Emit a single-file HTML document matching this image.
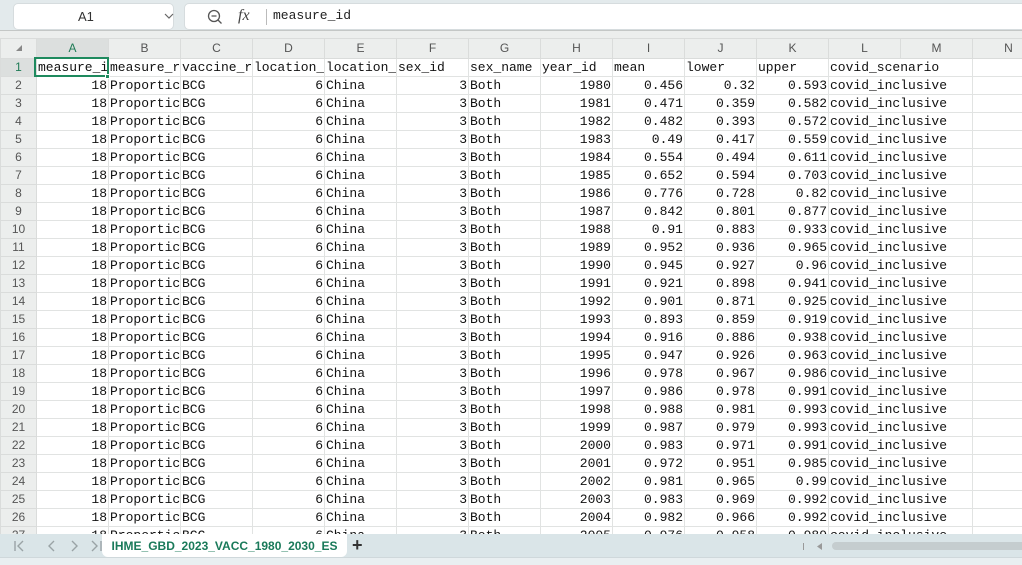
<!DOCTYPE html>
<html><head><meta charset="utf-8"><style>
*{margin:0;padding:0;box-sizing:border-box}
body{width:1022px;height:565px;overflow:hidden;background:#fff;position:relative;font-family:"Liberation Sans",sans-serif}
#top{position:absolute;left:0;top:0;width:1022px;height:30px;background:#e3eaec}
#nb{position:absolute;left:13px;top:3px;width:161px;height:27px;background:#fff;border:1px solid #d6dcde;border-radius:5px;font-size:13px;color:#333}
#fb{position:absolute;left:184px;top:3px;width:850px;height:27px;background:#fff;border:1px solid #d6dcde;border-radius:5px}
#hdrbg{position:absolute;left:0;top:30px;width:1022px;height:28px;background:#eceeed;border-top:1px solid #c4c7c6}
table{position:absolute;left:0;top:38px;width:1044px;border-collapse:collapse;table-layout:fixed;font-family:"Liberation Mono",monospace;font-size:13px;color:#111}
td{height:18px;border:1px solid #e1e3e2;white-space:nowrap;overflow:hidden;padding:0 1px;line-height:17px}
tr.ch td{height:20px;background:#eceeed;text-align:center;font-family:"Liberation Sans",sans-serif;color:#555;font-size:12px;border-color:#dadcdb}
td.rh{background:#eceeed;text-align:center;font-family:"Liberation Sans",sans-serif;color:#555;font-size:12px;border-color:#dadcdb}
td.n{text-align:right}
#tabs{position:absolute;left:0;top:534px;width:1022px;height:23px;background:#dae5e8}
#bot{position:absolute;left:0;top:557px;width:1022px;height:8px;background:#e9eff1;border-top:1px solid #cfd8db}
</style></head><body>
<div id="top"></div>
<div id="nb"><span style="position:absolute;left:64px;top:5px">A1</span><svg style="position:absolute;left:150px;top:9px" width="10" height="7"><path d="M1 1l4 4 4-4" fill="none" stroke="#666" stroke-width="1.2"/></svg></div>
<div id="fb"><svg style="position:absolute;left:22px;top:5px" width="16" height="16"><circle cx="7" cy="7" r="5.5" fill="none" stroke="#555" stroke-width="1.3"/><path d="M11 11l3.5 3.5M4.5 7h5" stroke="#555" stroke-width="1.3"/></svg><span style="position:absolute;left:53px;top:3px;font-family:'Liberation Serif',serif;font-style:italic;font-size:16px;color:#444">fx</span><div style="position:absolute;left:81px;top:5px;width:1px;height:16px;background:#bbb"></div><span style="position:absolute;left:88px;top:4px;font-family:'Liberation Mono',monospace;font-size:13px;color:#222">measure_id</span></div>
<div id="hdrbg"></div>
<table>
<colgroup><col style="width:36px"><col style="width:72px"><col style="width:72px"><col style="width:72px"><col style="width:72px"><col style="width:72px"><col style="width:72px"><col style="width:72px"><col style="width:72px"><col style="width:72px"><col style="width:72px"><col style="width:72px"><col style="width:72px"><col style="width:72px"><col style="width:72px"></colgroup>
<tr class="ch"><td><svg width="8" height="8"><path d="M7 1V7H1Z" fill="#888"/></svg></td><td style="background:#dcdfde;color:#1e7a55">A</td><td>B</td><td>C</td><td>D</td><td>E</td><td>F</td><td>G</td><td>H</td><td>I</td><td>J</td><td>K</td><td>L</td><td>M</td><td>N</td></tr>
<tr><td class="rh" style="background:#dcdfde;color:#1e7a55">1</td><td>measure_i</td><td>measure_r</td><td>vaccine_r</td><td>location_</td><td>location_</td><td>sex_id</td><td>sex_name</td><td>year_id</td><td>mean</td><td>lower</td><td>upper</td><td colspan="2">covid_scenario</td><td></td></tr>
<tr><td class="rh">2</td><td class="n">18</td><td>Proportic</td><td>BCG</td><td class="n">6</td><td>China</td><td class="n">3</td><td>Both</td><td class="n">1980</td><td class="n">0.456</td><td class="n">0.32</td><td class="n">0.593</td><td colspan="2">covid_inclusive</td><td></td></tr>
<tr><td class="rh">3</td><td class="n">18</td><td>Proportic</td><td>BCG</td><td class="n">6</td><td>China</td><td class="n">3</td><td>Both</td><td class="n">1981</td><td class="n">0.471</td><td class="n">0.359</td><td class="n">0.582</td><td colspan="2">covid_inclusive</td><td></td></tr>
<tr><td class="rh">4</td><td class="n">18</td><td>Proportic</td><td>BCG</td><td class="n">6</td><td>China</td><td class="n">3</td><td>Both</td><td class="n">1982</td><td class="n">0.482</td><td class="n">0.393</td><td class="n">0.572</td><td colspan="2">covid_inclusive</td><td></td></tr>
<tr><td class="rh">5</td><td class="n">18</td><td>Proportic</td><td>BCG</td><td class="n">6</td><td>China</td><td class="n">3</td><td>Both</td><td class="n">1983</td><td class="n">0.49</td><td class="n">0.417</td><td class="n">0.559</td><td colspan="2">covid_inclusive</td><td></td></tr>
<tr><td class="rh">6</td><td class="n">18</td><td>Proportic</td><td>BCG</td><td class="n">6</td><td>China</td><td class="n">3</td><td>Both</td><td class="n">1984</td><td class="n">0.554</td><td class="n">0.494</td><td class="n">0.611</td><td colspan="2">covid_inclusive</td><td></td></tr>
<tr><td class="rh">7</td><td class="n">18</td><td>Proportic</td><td>BCG</td><td class="n">6</td><td>China</td><td class="n">3</td><td>Both</td><td class="n">1985</td><td class="n">0.652</td><td class="n">0.594</td><td class="n">0.703</td><td colspan="2">covid_inclusive</td><td></td></tr>
<tr><td class="rh">8</td><td class="n">18</td><td>Proportic</td><td>BCG</td><td class="n">6</td><td>China</td><td class="n">3</td><td>Both</td><td class="n">1986</td><td class="n">0.776</td><td class="n">0.728</td><td class="n">0.82</td><td colspan="2">covid_inclusive</td><td></td></tr>
<tr><td class="rh">9</td><td class="n">18</td><td>Proportic</td><td>BCG</td><td class="n">6</td><td>China</td><td class="n">3</td><td>Both</td><td class="n">1987</td><td class="n">0.842</td><td class="n">0.801</td><td class="n">0.877</td><td colspan="2">covid_inclusive</td><td></td></tr>
<tr><td class="rh">10</td><td class="n">18</td><td>Proportic</td><td>BCG</td><td class="n">6</td><td>China</td><td class="n">3</td><td>Both</td><td class="n">1988</td><td class="n">0.91</td><td class="n">0.883</td><td class="n">0.933</td><td colspan="2">covid_inclusive</td><td></td></tr>
<tr><td class="rh">11</td><td class="n">18</td><td>Proportic</td><td>BCG</td><td class="n">6</td><td>China</td><td class="n">3</td><td>Both</td><td class="n">1989</td><td class="n">0.952</td><td class="n">0.936</td><td class="n">0.965</td><td colspan="2">covid_inclusive</td><td></td></tr>
<tr><td class="rh">12</td><td class="n">18</td><td>Proportic</td><td>BCG</td><td class="n">6</td><td>China</td><td class="n">3</td><td>Both</td><td class="n">1990</td><td class="n">0.945</td><td class="n">0.927</td><td class="n">0.96</td><td colspan="2">covid_inclusive</td><td></td></tr>
<tr><td class="rh">13</td><td class="n">18</td><td>Proportic</td><td>BCG</td><td class="n">6</td><td>China</td><td class="n">3</td><td>Both</td><td class="n">1991</td><td class="n">0.921</td><td class="n">0.898</td><td class="n">0.941</td><td colspan="2">covid_inclusive</td><td></td></tr>
<tr><td class="rh">14</td><td class="n">18</td><td>Proportic</td><td>BCG</td><td class="n">6</td><td>China</td><td class="n">3</td><td>Both</td><td class="n">1992</td><td class="n">0.901</td><td class="n">0.871</td><td class="n">0.925</td><td colspan="2">covid_inclusive</td><td></td></tr>
<tr><td class="rh">15</td><td class="n">18</td><td>Proportic</td><td>BCG</td><td class="n">6</td><td>China</td><td class="n">3</td><td>Both</td><td class="n">1993</td><td class="n">0.893</td><td class="n">0.859</td><td class="n">0.919</td><td colspan="2">covid_inclusive</td><td></td></tr>
<tr><td class="rh">16</td><td class="n">18</td><td>Proportic</td><td>BCG</td><td class="n">6</td><td>China</td><td class="n">3</td><td>Both</td><td class="n">1994</td><td class="n">0.916</td><td class="n">0.886</td><td class="n">0.938</td><td colspan="2">covid_inclusive</td><td></td></tr>
<tr><td class="rh">17</td><td class="n">18</td><td>Proportic</td><td>BCG</td><td class="n">6</td><td>China</td><td class="n">3</td><td>Both</td><td class="n">1995</td><td class="n">0.947</td><td class="n">0.926</td><td class="n">0.963</td><td colspan="2">covid_inclusive</td><td></td></tr>
<tr><td class="rh">18</td><td class="n">18</td><td>Proportic</td><td>BCG</td><td class="n">6</td><td>China</td><td class="n">3</td><td>Both</td><td class="n">1996</td><td class="n">0.978</td><td class="n">0.967</td><td class="n">0.986</td><td colspan="2">covid_inclusive</td><td></td></tr>
<tr><td class="rh">19</td><td class="n">18</td><td>Proportic</td><td>BCG</td><td class="n">6</td><td>China</td><td class="n">3</td><td>Both</td><td class="n">1997</td><td class="n">0.986</td><td class="n">0.978</td><td class="n">0.991</td><td colspan="2">covid_inclusive</td><td></td></tr>
<tr><td class="rh">20</td><td class="n">18</td><td>Proportic</td><td>BCG</td><td class="n">6</td><td>China</td><td class="n">3</td><td>Both</td><td class="n">1998</td><td class="n">0.988</td><td class="n">0.981</td><td class="n">0.993</td><td colspan="2">covid_inclusive</td><td></td></tr>
<tr><td class="rh">21</td><td class="n">18</td><td>Proportic</td><td>BCG</td><td class="n">6</td><td>China</td><td class="n">3</td><td>Both</td><td class="n">1999</td><td class="n">0.987</td><td class="n">0.979</td><td class="n">0.993</td><td colspan="2">covid_inclusive</td><td></td></tr>
<tr><td class="rh">22</td><td class="n">18</td><td>Proportic</td><td>BCG</td><td class="n">6</td><td>China</td><td class="n">3</td><td>Both</td><td class="n">2000</td><td class="n">0.983</td><td class="n">0.971</td><td class="n">0.991</td><td colspan="2">covid_inclusive</td><td></td></tr>
<tr><td class="rh">23</td><td class="n">18</td><td>Proportic</td><td>BCG</td><td class="n">6</td><td>China</td><td class="n">3</td><td>Both</td><td class="n">2001</td><td class="n">0.972</td><td class="n">0.951</td><td class="n">0.985</td><td colspan="2">covid_inclusive</td><td></td></tr>
<tr><td class="rh">24</td><td class="n">18</td><td>Proportic</td><td>BCG</td><td class="n">6</td><td>China</td><td class="n">3</td><td>Both</td><td class="n">2002</td><td class="n">0.981</td><td class="n">0.965</td><td class="n">0.99</td><td colspan="2">covid_inclusive</td><td></td></tr>
<tr><td class="rh">25</td><td class="n">18</td><td>Proportic</td><td>BCG</td><td class="n">6</td><td>China</td><td class="n">3</td><td>Both</td><td class="n">2003</td><td class="n">0.983</td><td class="n">0.969</td><td class="n">0.992</td><td colspan="2">covid_inclusive</td><td></td></tr>
<tr><td class="rh">26</td><td class="n">18</td><td>Proportic</td><td>BCG</td><td class="n">6</td><td>China</td><td class="n">3</td><td>Both</td><td class="n">2004</td><td class="n">0.982</td><td class="n">0.966</td><td class="n">0.992</td><td colspan="2">covid_inclusive</td><td></td></tr>
<tr><td class="rh">27</td><td class="n">18</td><td>Proportic</td><td>BCG</td><td class="n">6</td><td>China</td><td class="n">3</td><td>Both</td><td class="n">2005</td><td class="n">0.976</td><td class="n">0.958</td><td class="n">0.989</td><td colspan="2">covid_inclusive</td><td></td></tr>
</table>
<div style="position:absolute;left:34px;top:57px;width:75px;height:20px;border:2px solid #1e8a5e"></div>
<div style="position:absolute;left:105px;top:74px;width:5px;height:5px;background:#1e8a5e;border:1px solid #fff"></div>
<div id="tabs">
<svg style="position:absolute;left:12px;top:6px" width="90" height="12"><g fill="none" stroke="#9aa3a6" stroke-width="1.4"><path d="M3 1v10M11 1l-5 5 5 5"/><path d="M42 1l-5 5 5 5"/><path d="M60 1l5 5-5 5"/><path d="M80 1l5 5-5 5M89 1v10"/></g></svg>
<div style="position:absolute;left:102px;top:0;width:245px;height:23px;background:#fff;border-radius:0 0 6px 6px;text-align:center;font-size:12px;font-weight:bold;color:#1a7a5a;line-height:24px">IHME_GBD_2023_VACC_1980_2030_ES</div>
<div style="position:absolute;left:352px;top:1px;font-size:18px;font-weight:bold;color:#333">+</div>
<div style="position:absolute;left:803px;top:9px;width:1px;height:7px;background:#999"></div>
<svg style="position:absolute;left:817px;top:9px" width="6" height="7"><path d="M5 0V7L0 3.5Z" fill="#999"/></svg>
<div style="position:absolute;left:832px;top:8px;width:200px;height:8px;background:#c5cdcf;border-radius:4px"></div>
</div>
<div id="bot"></div>
</body></html>
